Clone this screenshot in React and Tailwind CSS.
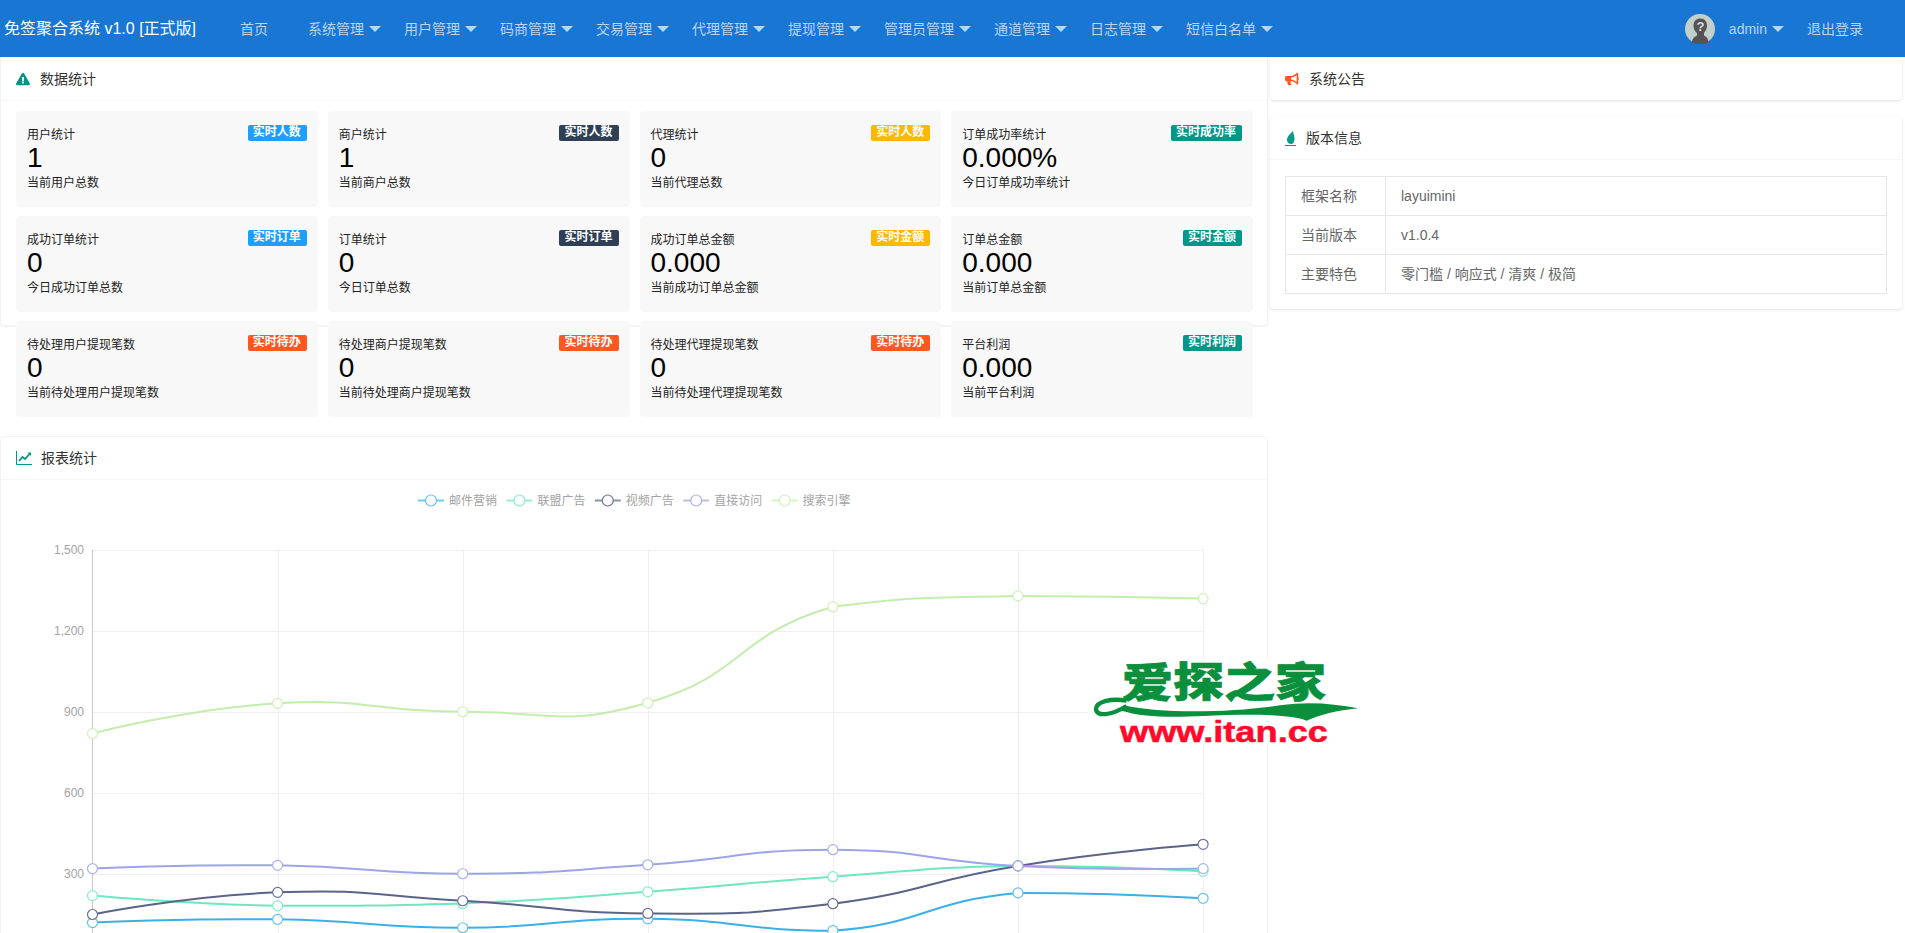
import React from "react";
import { FaExclamationTriangle, FaBullhorn } from "react-icons/fa";

const BLUE = "bg-[#1E9FFF]";
const NAVY = "bg-[#2F4056]";
const AMBER = "bg-[#FFB800]";
const TEAL = "bg-[#009688]";
const ORANGE = "bg-[#FF5722]";

const stats = [
  ["用户统计", "实时人数", BLUE, "1", "当前用户总数"],
  ["商户统计", "实时人数", NAVY, "1", "当前商户总数"],
  ["代理统计", "实时人数", AMBER, "0", "当前代理总数"],
  ["订单成功率统计", "实时成功率", TEAL, "0.000%", "今日订单成功率统计"],
  ["成功订单统计", "实时订单", BLUE, "0", "今日成功订单总数"],
  ["订单统计", "实时订单", NAVY, "0", "今日订单总数"],
  ["成功订单总金额", "实时金额", AMBER, "0.000", "当前成功订单总金额"],
  ["订单总金额", "实时金额", TEAL, "0.000", "当前订单总金额"],
  ["待处理用户提现笔数", "实时待办", ORANGE, "0", "当前待处理用户提现笔数"],
  ["待处理商户提现笔数", "实时待办", ORANGE, "0", "当前待处理商户提现笔数"],
  ["待处理代理提现笔数", "实时待办", ORANGE, "0", "当前待处理代理提现笔数"],
  ["平台利润", "实时利润", TEAL, "0.000", "当前平台利润"],
];

const navItems = ["系统管理", "用户管理", "码商管理", "交易管理", "代理管理", "提现管理", "管理员管理", "通道管理", "日志管理", "短信白名单"];

const series = [
  { name: "邮件营销", color: "#3bb0e8", mark: "#63c2ec", data: [120, 132, 101, 134, 90, 230, 210] },
  { name: "联盟广告", color: "#6fe6bf", mark: "#86ecca", data: [220, 182, 191, 234, 290, 330, 310] },
  { name: "视频广告", color: "#5a6488", mark: "#6b7396", data: [150, 232, 201, 154, 190, 330, 410] },
  { name: "直接访问", color: "#9da4e8", mark: "#aab0ec", data: [320, 332, 301, 334, 390, 330, 320] },
  { name: "搜索引擎", color: "#c3edac", mark: "#cdf0ba", data: [820, 932, 901, 934, 1290, 1330, 1320] },
];

const X0 = 92.5;
const DX = 185.1;
const Y0 = 955;
const K = 0.27;

function toPoints(data) {
  return data.map((v, i) => [X0 + DX * i, Y0 - v * K]);
}

// Same control-point rule as a smoothed ECharts line (smooth = 0.5), control points kept inside the series' range.
function smoothPath(pts) {
  const s = 0.5;
  const ys = pts.map((p) => p[1]);
  const minY = Math.min(...ys);
  const maxY = Math.max(...ys);
  const clampY = (y) => Math.min(maxY, Math.max(minY, y));
  let d = `M${pts[0][0]} ${pts[0][1]}`;
  let cp0 = pts[0];
  for (let i = 1; i < pts.length; i++) {
    const p = pts[i];
    let cp1 = p;
    let next = p;
    if (i < pts.length - 1) {
      const a = pts[i - 1];
      const b = pts[i + 1];
      const vx = b[0] - a[0];
      const vy = b[1] - a[1];
      const lp = Math.hypot(p[0] - a[0], p[1] - a[1]);
      const ln = Math.hypot(b[0] - p[0], b[1] - p[1]);
      const r = ln / (ln + lp);
      cp1 = [p[0] - vx * s * (1 - r), clampY(p[1] - vy * s * (1 - r))];
      next = [p[0] + vx * s * r, clampY(p[1] + vy * s * r)];
    }
    d += ` C${cp0[0]} ${cp0[1]} ${cp1[0]} ${cp1[1]} ${p[0]} ${p[1]}`;
    cp0 = next;
  }
  return d;
}

function Caret() {
  return (
    <span className="absolute right-[3px] top-1/2 mt-[-3px] h-0 w-0 border-x-[6px] border-t-[6px] border-x-transparent border-t-[rgba(255,255,255,0.7)]" />
  );
}

function Avatar() {
  return (
    <svg viewBox="0 0 30 30" className="mr-[14px] h-[30px] w-[30px]">
      <circle cx="15" cy="15" r="15" fill="#c3cfca" />
      <path d="M7 29 C7 24 10 22.5 12 21.5 L12 19 C9.5 17 8.5 14.5 8.5 11.5 C8.5 7 11.5 4.5 15.5 4.5 C19.5 4.5 22 7.5 22 11.5 C22 14.5 20.5 17 19 19 L19 21.5 C21 22.5 23.5 24 23.5 29 C19 30.5 11.5 30.5 7 29Z" fill="#545454" />
      <text x="15.5" y="17" textAnchor="middle" fontSize="13" fontWeight="700" fill="#d8dedb" fontFamily="Liberation Sans, sans-serif">?</text>
    </svg>
  );
}

function Header() {
  return (
    <header className="flex h-[57px] items-center bg-[#1976D2] text-sm text-[rgba(255,255,255,0.7)]">
      <div className="w-[220px] pl-1 text-base text-white">免签聚合系统 v1.0 [正式版]</div>
      <span className="flex h-full items-center px-5">首页</span>
      {navItems.map((n) => (
        <span key={n} className="relative flex h-full items-center px-5">
          {n}
          <Caret />
        </span>
      ))}
      <div className="ml-auto flex h-full items-center pr-[22px]">
        <span className="relative flex h-full items-center px-5">
          <Avatar />
          admin
          <Caret />
        </span>
        <span className="flex h-full items-center px-5">退出登录</span>
      </div>
    </header>
  );
}

function StatCard({ title, badge, color, num, sub }) {
  return (
    <div className="h-24 rounded-sm bg-[#f8f8f8] px-[11px] pt-[14px] text-[#222]">
      <div className="flex h-4 items-start justify-between">
        <span className="pt-[1px] text-xs leading-[18px]">{title}</span>
        <span className={`${color} h-4 rounded-[2px] pl-[5px] pr-[6px] text-xs font-bold leading-[14px] text-white`}>{badge}</span>
      </div>
      <div className="mt-[1px] h-[32px] text-[28px] leading-[32px] text-black">{num}</div>
      <div className="text-xs leading-[18px]">{sub}</div>
    </div>
  );
}

function LineChartIcon() {
  return (
    <svg viewBox="0 0 16 14" className="h-[14px] w-4">
      <path d="M0.5 0 V13.5 H16" fill="none" stroke="#009688" strokeWidth="1" />
      <path d="M3 10 L6.5 6 L9 8 L13.5 3" fill="none" stroke="#009688" strokeWidth="1.8" />
      <path d="M11.5 1.5 H15 V5 Z" fill="#009688" />
    </svg>
  );
}

function Chart() {
  const gridY = [550, 631, 712, 793, 874, 955];
  const labels = ["1,500", "1,200", "900", "600", "300"];
  const legendX = [431, 519.4, 607.8, 696.2, 784.6];
  return (
    <svg viewBox="1 480 1266 453" className="block h-[453px] w-[1266px]" fontFamily="Liberation Sans, Noto Sans CJK SC, sans-serif">
      {series.map((s, i) => (
        <g key={s.name}>
          <line x1={legendX[i] - 13} x2={legendX[i] + 13} y1="500.5" y2="500.5" stroke={s.color} strokeWidth="2" strokeOpacity="0.7" />
          <circle cx={legendX[i]} cy="500.5" r="5.5" fill="#fff" stroke={s.mark} strokeWidth="1.2" />
          <text x={legendX[i] + 18} y="504.5" fontSize="12" fill="#a3a3a3">{s.name}</text>
        </g>
      ))}
      {gridY.map((y) => (
        <line key={y} x1={X0} x2={X0 + DX * 6} y1={y + 0.5} y2={y + 0.5} stroke="#efefef" />
      ))}
      {[1, 2, 3, 4, 5, 6].map((i) => (
        <line key={i} x1={Math.round(X0 + DX * i) + 0.5} x2={Math.round(X0 + DX * i) + 0.5} y1="550" y2="955" stroke="#efefef" />
      ))}
      <line x1="92.5" x2="92.5" y1="550" y2="955" stroke="#c8c8c8" />
      {labels.map((l, i) => (
        <text key={l} x="84" y={gridY[i] + 4} textAnchor="end" fontSize="12" fill="#a3a3a3">{l}</text>
      ))}
      {series.map((s) => (
        <path key={s.name} d={smoothPath(toPoints(s.data))} fill="none" stroke={s.color} strokeWidth="2" />
      ))}
      {series.map((s) =>
        toPoints(s.data).map((p, i) => (
          <circle key={s.name + i} cx={p[0]} cy={p[1]} r="5" fill="#fff" stroke={s.mark} strokeWidth="1.2" />
        ))
      )}
    </svg>
  );
}

function Watermark() {
  return (
    <svg viewBox="0 -15 272 110" className="absolute left-[1088px] top-[645px] h-[110px] w-[272px]">
      <rect width="272" height="84" fill="#fff" />
      <text
        x="34"
        y="46"
        fontSize="51"
        fontWeight="900"
        fill="#0a8f3c"
        stroke="#0a8f3c"
        strokeWidth="0.9"
        textLength="204"
        lengthAdjust="spacingAndGlyphs"
        transform="scale(1 0.8)"
        fontFamily="Noto Sans CJK SC, sans-serif"
      >
        爱探之家
      </text>
      <g transform="translate(-28 -20) scale(0.3333)" fill="#0a8f3c">
        <path d="M200 182 C150 174 110 186 108 206 C108 232 155 226 200 198" fill="none" stroke="#0a8f3c" strokeWidth="13" />
        <path d="M190 196 C320 224 520 216 660 196 C740 184 820 190 895 205 C830 212 780 224 740 242 C690 222 560 222 430 228 C330 232 250 232 185 212 Z" />
      </g>
      <text
        x="32"
        y="82"
        fontSize="29"
        fontWeight="700"
        fill="#ff0a2a"
        stroke="#ff0a2a"
        strokeWidth="0.5"
        textLength="208"
        lengthAdjust="spacingAndGlyphs"
        fontFamily="Liberation Sans, sans-serif"
      >
        www.itan.cc
      </text>
    </svg>
  );
}

const tableRows = [
  ["框架名称", "layuimini"],
  ["当前版本", "v1.0.4"],
  ["主要特色", "零门槛 / 响应式 / 清爽 / 极简"],
];

export default function App() {
  return (
    <div className="relative h-[933px] w-[1905px] overflow-hidden bg-white font-['Liberation_Sans','Noto_Sans_CJK_SC',sans-serif]">
      <Header />
      <div className="flex items-start">
        <div className="w-[1268px]">
          <section className="mb-[110px] h-[269px] rounded-b border border-t-0 border-[#f2f2f2] bg-white shadow-[0_1px_2px_rgba(0,0,0,0.06)]">
            <div className="flex h-[44px] items-center gap-[10px] border-b border-[#f6f6f6] pl-[15px] text-sm text-[#333]">
              <FaExclamationTriangle className="h-[14px] w-[14px] text-[#009688]" />
              <span>数据统计</span>
            </div>
            <div className="grid grid-cols-4 gap-x-[10px] gap-y-[9px] pl-[15px] pr-[14px] pt-[10px]">
              {stats.map((s) => (
                <StatCard key={s[0]} title={s[0]} badge={s[1]} color={s[2]} num={s[3]} sub={s[4]} />
              ))}
            </div>
          </section>
          <section className="h-[520px] rounded-t border border-[#f2f2f2] bg-white">
            <div className="flex h-[43px] items-center gap-[9px] border-b border-[#f6f6f6] pl-[15px] text-sm text-[#333]">
              <LineChartIcon />
              <span>报表统计</span>
            </div>
            <Chart />
          </section>
        </div>
        <aside className="ml-[2px] w-[632px]">
          <section className="mt-px rounded bg-white shadow-[0_1px_3px_rgba(0,0,0,0.12)]">
            <div className="flex h-[42px] items-center gap-[10px] pl-[15px] text-sm text-[#333]">
              <FaBullhorn className="h-[14px] w-[14px] text-[#FF5722]" />
              <span>系统公告</span>
            </div>
          </section>
          <section className="mt-[17px] rounded bg-white pb-[15px] shadow-[0_1px_3px_rgba(0,0,0,0.12)]">
            <div className="flex h-[43px] items-center gap-[10px] border-b border-[#f6f6f6] pl-[15px] text-sm text-[#333]">
              <svg viewBox="0 0 11 15" className="h-[15px] w-[11px]">
                <path d="M8 0 C5 3 2 5.5 2 9 C2 11.5 4 13 6 13 C8.5 13 9.5 10.5 9.5 8 C9.5 5 8.5 3 8 0Z" fill="#0d9a8c" />
                <rect y="14" width="11" height="1" fill="#009688" />
              </svg>
              <span>版本信息</span>
            </div>
            <div className="px-[15px] pt-4">
              <table className="w-[602px] border-collapse text-sm text-[#666]">
                <tbody>
                  {tableRows.map((r) => (
                    <tr key={r[0]} className="h-[39px]">
                      <td className="w-[100px] border border-[#e6e6e6] px-[15px]">{r[0]}</td>
                      <td className="border border-[#e6e6e6] px-[15px]">{r[1]}</td>
                    </tr>
                  ))}
                </tbody>
              </table>
            </div>
          </section>
        </aside>
      </div>
      <Watermark />
    </div>
  );
}
